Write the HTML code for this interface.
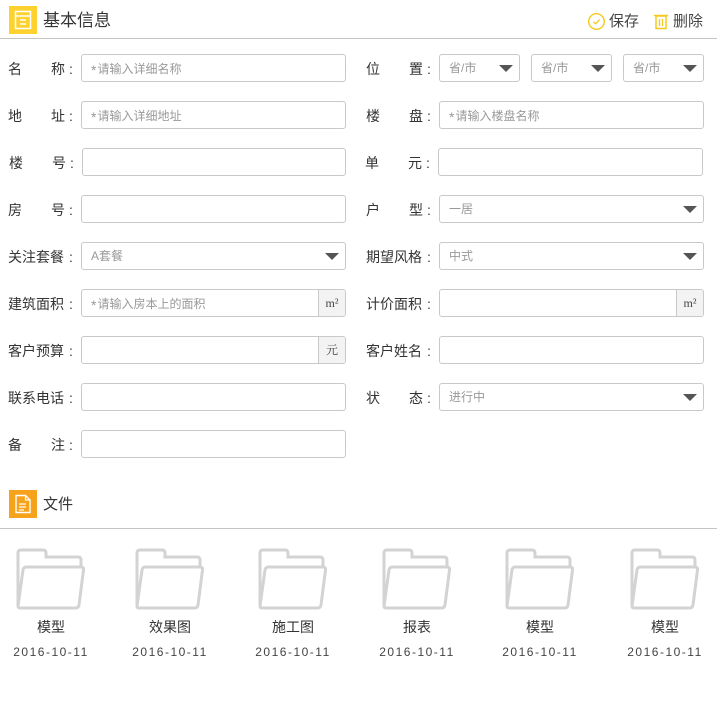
<!DOCTYPE html>
<html><head><meta charset="utf-8"><style>
*{margin:0;padding:0;box-sizing:border-box}
body{width:717px;height:705px;background:#fff;position:relative;overflow:hidden;font-family:"Liberation Sans","Noto Sans CJK SC",sans-serif;color:#333}
.a{position:absolute}
.lbl{position:absolute;font-size:14px;line-height:28px;color:#333;white-space:nowrap}
.lbl b{font-weight:normal;position:absolute}
.in{position:absolute;height:28px;border:1px solid #c9c9c9;border-radius:3px;font-size:12px;color:#999;line-height:26px;padding-left:9px;white-space:nowrap;overflow:hidden}
.in i{font-style:normal;font-size:14px;margin-right:1px;position:relative;top:2px}
.tri{position:absolute;right:6px;top:10px;width:0;height:0;border-left:7px solid transparent;border-right:7px solid transparent;border-top:7px solid #555}
.unit{position:absolute;right:0;top:0;width:27px;height:26px;background:#f3f3f3;border-left:1px solid #c9c9c9;color:#444;font-size:12px;text-align:center;font-family:"Liberation Serif","Noto Serif CJK SC",serif}
.f{position:absolute;top:548px;width:90px;text-align:center}
.f svg{display:block;margin:0 auto}
.f .n{font-size:14px;line-height:18px;color:#333;margin-top:8px;white-space:nowrap}
.f .d{font-size:12px;line-height:16px;color:#444;letter-spacing:1.5px;margin-top:8px;white-space:nowrap;font-family:"Liberation Sans",sans-serif}
</style></head><body>
<div class="a" style="left:9px;top:6px;width:28px;height:28px;background:#fdd22e">
<svg width="28" height="28"><rect x="6.5" y="5.5" width="15" height="17" fill="none" stroke="#fff" stroke-width="1.5"/><line x1="7" y1="10" x2="21" y2="10" stroke="#fff" stroke-width="1.5"/><line x1="11" y1="14" x2="17" y2="14" stroke="#fff" stroke-width="1.5"/><line x1="11" y1="18" x2="17" y2="18" stroke="#fff" stroke-width="1.5"/></svg></div>
<div class="a" style="left:43px;top:10px;font-size:17px;line-height:22px;color:#333">基本信息</div>
<svg class="a" style="left:587px;top:12px" width="19" height="19"><circle cx="9.5" cy="9.5" r="7.8" fill="none" stroke="#f6c81e" stroke-width="1.4"/><path d="M6.3 9.7 L8.6 11.8 L12.6 7.6" fill="none" stroke="#f6c81e" stroke-width="1.3"/></svg>
<div class="a" style="left:609px;top:12px;font-size:15px;line-height:20px;color:#444">保存</div>
<svg class="a" style="left:653px;top:13px" width="16" height="17"><line x1="1" y1="2.5" x2="15" y2="2.5" stroke="#f6c81e" stroke-width="1.5"/><rect x="3" y="3" width="10" height="12.5" fill="none" stroke="#f6c81e" stroke-width="1.5"/><line x1="6.5" y1="6" x2="6.5" y2="13" stroke="#f6c81e" stroke-width="1.3"/><line x1="9.5" y1="6" x2="9.5" y2="13" stroke="#f6c81e" stroke-width="1.3"/></svg>
<div class="a" style="left:673px;top:12px;font-size:15px;line-height:20px;color:#444">删除</div>
<div class="a" style="left:0;top:38px;width:717px;height:1px;background:#c4c4c4"></div>

<div class="lbl" style="left:8px;top:55px">名<b style="left:43px">称</b><b style="left:61px">:</b></div>
<div class="in" style="left:81px;top:54px;width:265px"><i>*</i>请输入详细名称</div>
<div class="lbl" style="left:8px;top:102px">地<b style="left:43px">址</b><b style="left:61px">:</b></div>
<div class="in" style="left:81px;top:101px;width:265px"><i>*</i>请输入详细地址</div>
<div class="lbl" style="left:9px;top:149px">楼<b style="left:43px">号</b><b style="left:61px">:</b></div>
<div class="in" style="left:82px;top:148px;width:264px"></div>
<div class="lbl" style="left:8px;top:196px">房<b style="left:43px">号</b><b style="left:61px">:</b></div>
<div class="in" style="left:81px;top:195px;width:265px"></div>
<div class="lbl" style="left:8px;top:243px">关注套餐<b style="left:61px">:</b></div>
<div class="in" style="left:81px;top:242px;width:265px">A套餐<span class="tri"></span></div>
<div class="lbl" style="left:8px;top:290px">建筑面积<b style="left:61px">:</b></div>
<div class="in" style="left:81px;top:289px;width:265px"><i>*</i>请输入房本上的面积<span class="unit">m²</span></div>
<div class="lbl" style="left:8px;top:337px">客户预算<b style="left:61px">:</b></div>
<div class="in" style="left:81px;top:336px;width:265px"><span class="unit">元</span></div>
<div class="lbl" style="left:8px;top:384px">联系电话<b style="left:61px">:</b></div>
<div class="in" style="left:81px;top:383px;width:265px"></div>
<div class="lbl" style="left:8px;top:431px">备<b style="left:43px">注</b><b style="left:61px">:</b></div>
<div class="in" style="left:81px;top:430px;width:265px"></div>

<div class="lbl" style="left:366px;top:55px">位<b style="left:43px">置</b><b style="left:61px">:</b></div>
<div class="in" style="left:439px;top:54px;width:81px">省/市<span class="tri"></span></div>
<div class="in" style="left:531px;top:54px;width:81px">省/市<span class="tri"></span></div>
<div class="in" style="left:623px;top:54px;width:81px">省/市<span class="tri"></span></div>
<div class="lbl" style="left:366px;top:102px">楼<b style="left:43px">盘</b><b style="left:61px">:</b></div>
<div class="in" style="left:439px;top:101px;width:265px"><i>*</i>请输入楼盘名称</div>
<div class="lbl" style="left:365px;top:149px">单<b style="left:43px">元</b><b style="left:61px">:</b></div>
<div class="in" style="left:438px;top:148px;width:265px"></div>
<div class="lbl" style="left:366px;top:196px">户<b style="left:43px">型</b><b style="left:61px">:</b></div>
<div class="in" style="left:439px;top:195px;width:265px">一居<span class="tri"></span></div>
<div class="lbl" style="left:366px;top:243px">期望风格<b style="left:61px">:</b></div>
<div class="in" style="left:439px;top:242px;width:265px">中式<span class="tri"></span></div>
<div class="lbl" style="left:366px;top:290px">计价面积<b style="left:61px">:</b></div>
<div class="in" style="left:439px;top:289px;width:265px"><span class="unit">m²</span></div>
<div class="lbl" style="left:366px;top:337px">客户姓名<b style="left:61px">:</b></div>
<div class="in" style="left:439px;top:336px;width:265px"></div>
<div class="lbl" style="left:366px;top:384px">状<b style="left:43px">态</b><b style="left:61px">:</b></div>
<div class="in" style="left:439px;top:383px;width:265px">进行中<span class="tri"></span></div>

<div class="a" style="left:9px;top:490px;width:28px;height:28px;background:#f7a21b">
<svg width="28" height="28"><path d="M7 5.5 H16.5 L21 10 V22.5 H7 Z" fill="none" stroke="#fff" stroke-width="1.4"/><path d="M16.5 5.5 V10 H21" fill="none" stroke="#fff" stroke-width="1.2"/><line x1="10" y1="14" x2="17" y2="14" stroke="#fff" stroke-width="1.2"/><line x1="10" y1="17" x2="17" y2="17" stroke="#fff" stroke-width="1.2"/><line x1="10" y1="20" x2="15" y2="20" stroke="#fff" stroke-width="1.2"/></svg></div>
<div class="a" style="left:43px;top:495px;font-size:15px;line-height:20px;color:#333">文件</div>
<div class="a" style="left:0;top:528px;width:717px;height:1px;background:#c4c4c4"></div>

<svg width="0" height="0" style="position:absolute"><defs><g id="fd"><path d="M3 58 V5 Q3 2 6 2 H28 Q31 2 31 5 V9 H63 Q66 9 66 12 V19" fill="none" stroke="#d3d3d3" stroke-width="3"/><path d="M3 58 L8 22 Q8.5 19 11.5 19 H66 Q69 19 68.5 22 L64 57 Q63.5 60 60.5 60 H5 Q3 60 3 58 Z" fill="none" stroke="#d3d3d3" stroke-width="3"/></g></defs></svg>
<div class="f" style="left:6px"><svg width="72" height="62"><use href="#fd"/></svg><div class="n">模型</div><div class="d">2016-10-11</div></div>
<div class="f" style="left:125px"><svg width="72" height="62"><use href="#fd"/></svg><div class="n">效果图</div><div class="d">2016-10-11</div></div>
<div class="f" style="left:248px"><svg width="72" height="62"><use href="#fd"/></svg><div class="n">施工图</div><div class="d">2016-10-11</div></div>
<div class="f" style="left:372px"><svg width="72" height="62"><use href="#fd"/></svg><div class="n">报表</div><div class="d">2016-10-11</div></div>
<div class="f" style="left:495px"><svg width="72" height="62"><use href="#fd"/></svg><div class="n">模型</div><div class="d">2016-10-11</div></div>
<div class="f" style="left:620px"><svg width="72" height="62"><use href="#fd"/></svg><div class="n">模型</div><div class="d">2016-10-11</div></div>
</body></html>
